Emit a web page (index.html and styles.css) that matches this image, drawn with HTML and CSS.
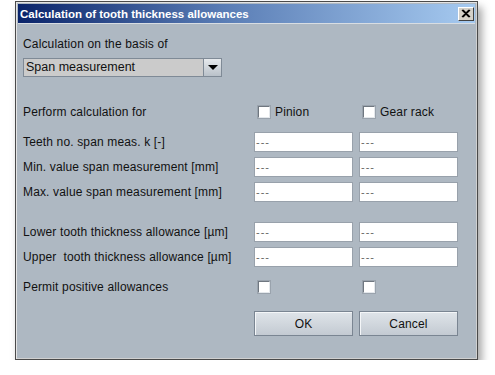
FILE: index.html
```html
<!DOCTYPE html>
<html lang="en">
<head>
	<meta charset="UTF-8">
	<title>Calculation of tooth thickness allowances</title>
	<link rel="stylesheet" href="styles.css">
</head>
<body>
	<div class="window">
		<div class="titlebar">
			<span class="title">Calculation of tooth thickness allowances</span>
			<button class="close">
				<svg width="10" height="9" viewBox="0 0 10 9">
					<path d="M1 1 L8 8 M2 1 L9 8 M8 1 L1 8 M9 1 L2 8" stroke="#000" stroke-width="1.2" fill="none"/>
				</svg>
			</button>
		</div>
		<div class="content">
			<div class="basis-label">Calculation on the basis of</div>
			<div class="combo">
				<span class="combo-value">Span measurement</span>
				<span class="combo-arrow"></span>
			</div>

			<div class="row perform">
				<span class="label">Perform calculation for</span>
				<label class="check"><span class="box"></span>Pinion</label>
				<label class="check"><span class="box"></span>Gear rack</label>
			</div>

			<div class="group">
				<div class="row">
					<span class="label">Teeth no. span meas. k [-]</span>
					<span class="field">---</span>
					<span class="field">---</span>
				</div>
				<div class="row">
					<span class="label">Min. value span measurement [mm]</span>
					<span class="field">---</span>
					<span class="field">---</span>
				</div>
				<div class="row">
					<span class="label">Max. value span measurement [mm]</span>
					<span class="field">---</span>
					<span class="field">---</span>
				</div>
			</div>

			<div class="group allowances">
				<div class="row">
					<span class="label">Lower tooth thickness allowance [µm]</span>
					<span class="field">---</span>
					<span class="field">---</span>
				</div>
				<div class="row">
					<span class="label">Upper &nbsp;tooth thickness allowance [µm]</span>
					<span class="field">---</span>
					<span class="field">---</span>
				</div>
			</div>

			<div class="row permit">
				<span class="label">Permit positive allowances</span>
				<label class="check"><span class="box"></span></label>
				<label class="check"><span class="box"></span></label>
			</div>

			<div class="row buttons">
				<span></span>
				<button class="btn">OK</button>
				<button class="btn">Cancel</button>
			</div>
		</div>
	</div>
</body>
</html>
```

FILE: styles.css
```css
body {
	margin: 0;
	padding: 0;
	background: #fff;
	font-family: 'Liberation Sans', Arial, sans-serif;
	font-size: 12px;
	letter-spacing: 0.15px;
	color: #111;
}

.window {
	margin: 1px 0 0 15px;
	width: 457px;
	height: 353px;
	background: #aeb8c2;
	border: 1px solid #4a4a4a;
	box-shadow: inset 1px 1px 0 #e4e4e4, inset -1px -1px 0 #d0d0d0, 4px 6px 8px rgba(0, 0, 0, 0.35);
	padding: 2px;
	box-sizing: content-box;
}

.titlebar {
	height: 19px;
	display: flex;
	align-items: center;
	justify-content: space-between;
	padding: 0 1px 0 2px;
	background: linear-gradient(to right, #0a246a, #5a7db5 45%, #a6caf0);
	border-bottom: 1px solid #d8dde2;
}

.title {
	color: #fff;
	font-family: 'Liberation Sans', Arial, sans-serif;
	font-weight: bold;
	font-size: 11.5px;
	letter-spacing: 0;
}

.close {
	width: 16px;
	height: 14px;
	padding: 0;
	margin: 0;
	display: flex;
	align-items: center;
	justify-content: center;
	background: #d4d0c8;
	border: 1px solid;
	border-color: #fff #404040 #404040 #fff;
}

.content {
	padding: 12px 0 0 5px;
}

.basis-label {
	height: 16px;
	line-height: 16px;
}

.combo {
	margin-top: 6px;
	width: 199px;
	height: 19px;
	display: flex;
	border: 1px solid #7f8a96;
	box-sizing: border-box;
	background: #cbcbcb;
}

.combo-value {
	flex: 1;
	line-height: 17px;
	padding-left: 2px;
	font-size: 12.5px;
	letter-spacing: 0;
}

.combo-arrow {
	width: 17px;
	border-left: 1px solid #7f8a96;
	background: linear-gradient(#e6e9ec, #b9c1c9);
	position: relative;
}

.combo-arrow::after {
	content: '';
	position: absolute;
	left: 4px;
	top: 6px;
	border-left: 5px solid transparent;
	border-right: 5px solid transparent;
	border-top: 5px solid #000;
}

.row {
	display: grid;
	grid-template-columns: 225px 99px 99px;
	column-gap: 6px;
	align-items: center;
	height: 20px;
}

.perform {
	margin-top: 25px;
}

.group {
	display: grid;
	row-gap: 5px;
	margin-top: 10px;
}

.allowances {
	margin-top: 20px;
}

.permit {
	margin-top: 10px;
}

.check {
	display: flex;
	align-items: center;
	padding-left: 4px;
	gap: 5px;
}

.box {
	width: 10px;
	height: 10px;
	background: #fff;
	border: 1px solid;
	border-color: #6f7780 #e4e8ec #e4e8ec #6f7780;
	box-shadow: 0 0 0 1px #9aa3ad;
}

.field {
	height: 20px;
	box-sizing: border-box;
	background: #fff;
	border: 1px solid #98a1ab;
	color: #666;
	font-size: 11px;
	letter-spacing: 1px;
	line-height: 18px;
	padding-left: 1px;
}

.buttons {
	margin-top: 14px;
	height: 25px;
}

.btn {
	height: 25px;
	margin: 0;
	font-family: 'Liberation Sans', Arial, sans-serif;
	font-size: 12px;
	letter-spacing: 0.15px;
	color: #111;
	background: linear-gradient(#dfe4e9, #c3cad2);
	border: 1px solid #7a8592;
	box-shadow: inset 1px 1px 0 #f4f6f8;
}
```
